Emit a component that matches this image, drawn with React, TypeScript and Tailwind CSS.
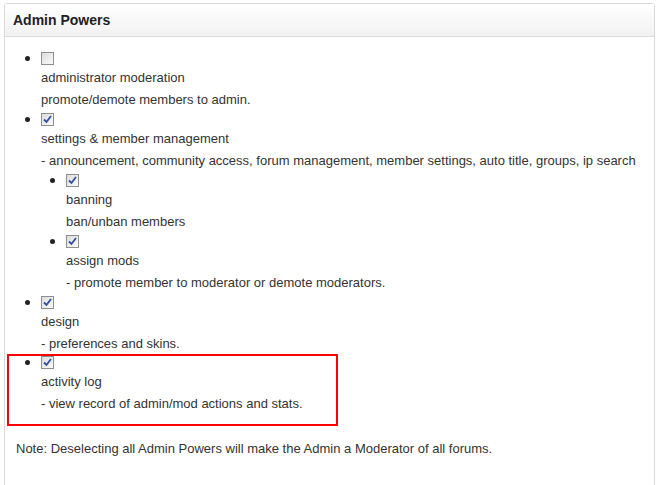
import type { ReactNode } from "react";

type Power = {
  label: string;
  desc: string;
  checked: boolean;
  children?: Power[];
};

const powers: Power[] = [
  {
    label: "administrator moderation",
    desc: "promote/demote members to admin.",
    checked: false,
  },
  {
    label: "settings & member management",
    desc: "- announcement, community access, forum management, member settings, auto title, groups, ip search",
    checked: true,
    children: [
      { label: "banning", desc: "ban/unban members", checked: true },
      {
        label: "assign mods",
        desc: "- promote member to moderator or demote moderators.",
        checked: true,
      },
    ],
  },
  { label: "design", desc: "- preferences and skins.", checked: true },
];

const activityLog: Power = {
  label: "activity log",
  desc: "- view record of admin/mod actions and stats.",
  checked: true,
};

function Checkbox({ checked }: { checked: boolean }) {
  return (
    <span className="flex h-[13px] w-[13px] items-center justify-center border border-[#8e8f8f] bg-gradient-to-br from-[#dcdcdc] to-[#fbfbfb]">
      {checked && (
        <svg width="9" height="9" viewBox="0 0 9 9">
          <path d="M1 4.5 L3.5 7 L8 1" fill="none" stroke="#2f4f9f" strokeWidth="1.8" />
        </svg>
      )}
    </span>
  );
}

function Item({ power, className = "" }: { power: Power; className?: string }) {
  return (
    <li className={`flex ${className}`}>
      {/* bullet column */}
      <div className="flex h-[20px] w-[19px] shrink-0 items-center">
        <span className="ml-[3px] h-[5px] w-[5px] rounded-full bg-[#222]" />
      </div>
      <div>
        <div className="flex h-[20px] items-center">
          <Checkbox checked={power.checked} />
        </div>
        <div className="pt-[1px] leading-[18px]">{power.label}</div>
        <div className="mt-[4px] leading-[18px]">{power.desc}</div>
        {power.children && (
          <ul className="pl-[6px]">
            {power.children.map((c) => (
              <Item key={c.label} power={c} />
            ))}
          </ul>
        )}
      </div>
    </li>
  );
}

function Highlight({ children }: { children: ReactNode }) {
  return (
    <div className="-ml-[15px] mt-[1px] w-[331px] border-2 border-[#ff0000] pb-[11px] pl-[13px]">
      {children}
    </div>
  );
}

export default function App() {
  return (
    <div
      className="h-[485px] w-[662px] overflow-hidden bg-white pl-[4px] pt-[3px] text-[13px] text-[#333]"
      style={{ fontFamily: '"Liberation Sans", Arial, sans-serif' }}
    >
      <div className="h-[600px] w-[651px] rounded-t-[3px] border border-[#dadada]">
        {/* Header */}
        <div className="flex h-[33px] items-center border-b border-[#dadada] bg-gradient-to-b from-white to-[#f1f1f1] pl-[8px]">
          <h2 className="text-[14px] font-bold text-[#222]">Admin Powers</h2>
        </div>

        {/* Body */}
        <ul className="pl-[17px] pt-[11px]">
          {powers.map((p) => (
            <Item key={p.label} power={p} />
          ))}
          <Highlight>
            <Item power={activityLog} className="-mt-[4px]" />
          </Highlight>
        </ul>

        <p className="mt-[14px] pl-[11px] leading-[18px]">
          Note: Deselecting all Admin Powers will make the Admin a Moderator of all forums.
        </p>
      </div>
    </div>
  );
}
